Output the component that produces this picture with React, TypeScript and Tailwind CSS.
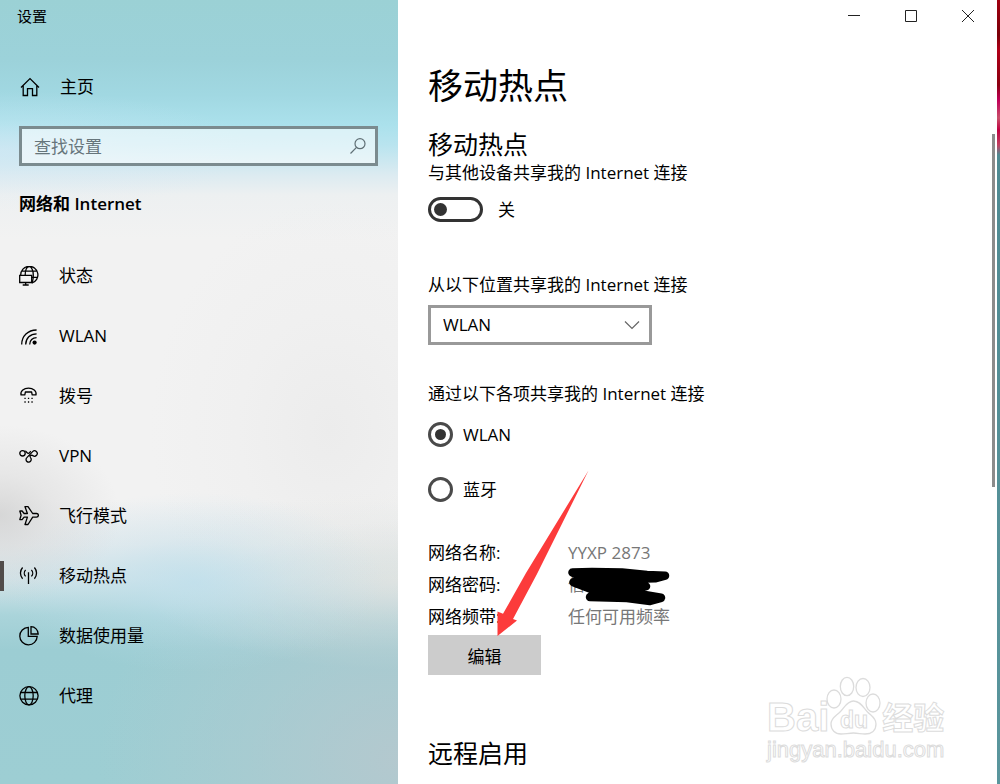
import { useState } from 'react'
import type { ReactNode } from 'react'

interface NavItem {
  id: string
  label: string
  icon: ReactNode
}

function Icon({ children }: { children: ReactNode }) {
  return (
    <svg viewBox="0 0 20 20" className="size-5 shrink-0" fill="none" stroke="currentColor" strokeWidth="1.3" aria-hidden="true">
      {children}
    </svg>
  )
}

const navItems: NavItem[] = [
  {
    id: 'status',
    label: '状态',
    icon: (
      <Icon>
        <path d="M1.700 9A8.600 8.600 0 1 1 12.700 17.200M3 5.200h14.600M12.700 11.300h6.100M6.200 9C6.300 4 8 .7 10.300.7s4 3.800 4 8.300-.8 6.800-1.700 8" />
        <path d="M.7 9.300h12v7.200H.7zM6.700 16.500v2.200M3.700 19h6" />
      </Icon>
    ),
  },
  {
    id: 'wlan',
    label: 'WLAN',
    icon: (
      <Icon>
        <path d="M2.700 18.500C2.700 10 9 4 17.600 4M6.700 18.500c0-6.200 4.500-10.700 10.900-10.700M10.700 18.500c0-4 2.800-6.900 6.900-6.900" />
        <circle cx="15.600" cy="16.600" r="2.100" fill="currentColor" stroke="none" />
      </Icon>
    ),
  },
  {
    id: 'dialup',
    label: '拨号',
    icon: (
      <Icon>
        <path d="M5.800 8.800H2C1.200 4.600 5 2.200 9.500 2.200s8.300 2.400 7.500 6.600h-3.800l-.6-2.800H6.400z" strokeLinejoin="round" />
        <path d="M5.400 12.300h1.300M8.900 12.300h1.300M12.400 12.300h1.300M5.400 16h1.300M8.900 16h1.300M12.400 16h1.300" />
      </Icon>
    ),
  },
  {
    id: 'vpn',
    label: 'VPN',
    icon: (
      <Icon>
        <circle cx="3.500" cy="7.300" r="2.700" />
        <path d="M6.200 5.200c1.200 0 1.800 2.200 3.200 2.200 1.200 0 1.400-1.600 2.400-2.200" />
        <path d="M7.600 11.900 13.600 5.600a2.700 2.700 0 1 1 .2 4c-1-.7-2.800-.2-2.900 1.400" />
        <path d="M11 11.300a2.600 2.600 0 1 1-3.400.6" />
      </Icon>
    ),
  },
  {
    id: 'airplane',
    label: '飞行模式',
    icon: (
      <Icon>
        <path d="M.8 5h2.300l2 2.500h3.300L6 .7h3l4.700 6.800h3.800c2.500 0 2.500 3.600 0 3.600h-3.800L9 18.500H6l2.400-7.400H5.100l-2 2.500H.8l1.300-4.300z" strokeLinejoin="round" />
      </Icon>
    ),
  },
  {
    id: 'hotspot',
    label: '移动热点',
    icon: (
      <Icon>
        <path d="M9.500 6.300V18M6.600 4a4.600 4.600 0 0 0 0 6.400M12.400 4a4.600 4.600 0 0 1 0 6.400M3.600 1.500a8.400 8.400 0 0 0 0 11.200M15.400 1.500a8.400 8.400 0 0 1 0 11.200" />
      </Icon>
    ),
  },
  {
    id: 'usage',
    label: '数据使用量',
    icon: (
      <Icon>
        <path d="M9.300 1.400a8.700 8.700 0 1 0 8.900 8.900H9.300z" />
        <path d="M12 .7v7.300h7.200A7.300 7.300 0 0 0 12 .7z" />
      </Icon>
    ),
  },
  {
    id: 'proxy',
    label: '代理',
    icon: (
      <Icon>
        <circle cx="10" cy="9.800" r="9.100" />
        <ellipse cx="10" cy="9.800" rx="4.200" ry="9.100" />
        <path d="M1.700 6.500h16.600M1.700 13.100h16.600" />
      </Icon>
    ),
  },
]

function Sidebar({ active, onSelect }: { active: string; onSelect: (id: string) => void }) {
  return (
    <aside className="w-[398px] shrink-0 bg-[radial-gradient(ellipse_120px_90px_at_0px_515px,rgba(204,204,204,0.7),rgba(204,204,204,0.3)_45%,rgba(204,204,204,0)),radial-gradient(ellipse_190px_90px_at_195px_582px,rgba(190,223,236,0.8),rgba(190,223,236,0.3)_50%,rgba(190,223,236,0)),radial-gradient(ellipse_300px_240px_at_398px_760px,rgba(182,200,206,0.9),rgba(182,200,206,0.4)_50%,rgba(182,200,206,0)),radial-gradient(ellipse_260px_90px_at_398px_580px,rgba(234,234,230,0.9),rgba(234,234,230,0.4)_50%,rgba(234,234,230,0)),radial-gradient(ellipse_180px_230px_at_330px_430px,rgba(225,225,225,0.35),rgba(225,225,225,0.12)_50%,rgba(225,225,225,0)),radial-gradient(ellipse_260px_60px_at_0px_150px,rgba(215,233,245,0.6),rgba(215,233,245,0.2)_50%,rgba(215,233,245,0)),linear-gradient(#9bd1d5_0px,#9cd2da_60px,#a1d8e2_95px,#abe1ec_125px,#b9e4ef_145px,#dcebf1_175px,#edf0f1_195px,#f2f2f2_240px,#f2f2f2_500px,#e8ecee_545px,#d2e4e9_580px,#aad4da_615px,#9ccdd3_650px,#9dced3_784px)]">
      <div className="flex h-8 items-center pl-[17px] text-[15px]">设置</div>
      <a href="#home" className="mt-[34px] flex h-[42px] items-center gap-5 pl-5">
        <Icon>
          <path d="M1 10.500 10 1.600l9 8.900M3.200 8.500v10h4.300v-6.800h5v6.800h4.300v-10" />
        </Icon>
        主页
      </a>
      <div className="mt-[18px] pr-5 pl-[19px]">
        <div className="flex h-10 items-center border-[3px] border-[#7b8b8f] bg-white/55 pr-2 pl-3 text-[#5f6f75]">
          <input type="text" aria-label="查找设置" placeholder="查找设置" className="h-8 min-w-0 flex-1 bg-transparent outline-none placeholder:text-[#66757b]" />
          <svg viewBox="0 0 18 18" className="size-[18px]" fill="none" stroke="currentColor" strokeWidth="1.200" aria-hidden="true">
            <circle cx="11" cy="6.700" r="5" />
            <path d="M7.500 10.300 1.500 16.500" />
          </svg>
        </div>
      </div>
      <h2 className="mt-[26px] pl-[19px] leading-6 font-bold">
        网络和 <span className="font-semibold">Internet</span>
      </h2>
      <nav className="mt-[30px]">
        {navItems.map((item) => (
          <a
            key={item.id}
            href={`#${item.id}`}
            onClick={() => onSelect(item.id)}
            aria-current={item.id === active ? 'page' : undefined}
            className="flex h-[60px] items-center"
          >
            <span className={item.id === active ? 'h-[30px] w-1 bg-[#514c4a]' : 'w-1'} />
            <span className="flex items-center gap-5 pl-[15px]">
              {item.icon}
              {item.label}
            </span>
          </a>
        ))}
      </nav>
    </aside>
  )
}

function WindowButtons() {
  const button = 'flex h-8 w-[57px] items-center justify-center'
  return (
    <div className="flex justify-end">
      <button type="button" aria-label="最小化" className={button}>
        <svg viewBox="0 0 13 13" className="size-[13px]" stroke="#222">
          <path d="M0 5.500h12" />
        </svg>
      </button>
      <button type="button" aria-label="最大化" className={button}>
        <svg viewBox="0 0 13 13" className="size-[13px]" stroke="#222" fill="none">
          <path d="M.5.5h11v11H.5z" />
        </svg>
      </button>
      <button type="button" aria-label="关闭" className={button}>
        <svg viewBox="0 0 13 13" className="size-[13px]" stroke="#222">
          <path d="m0 0 12 12M12 0 0 12" />
        </svg>
      </button>
    </div>
  )
}

function ShareOption({ label, checked, onChange }: { label: string; checked: boolean; onChange: () => void }) {
  return (
    <label className="flex h-[25px] items-center gap-[10px]">
      <input
        type="radio"
        name="share-over"
        checked={checked}
        onChange={onChange}
        className="flex size-[25px] appearance-none items-center justify-center rounded-full border-[3px] border-[#4a4a4a] before:size-[11px] before:rounded-full checked:before:bg-[#333]"
      />
      {label}
    </label>
  )
}

function Watermark() {
  const outline = 'text-white [-webkit-text-stroke:1px_#dcdcdc]'
  return (
    <div className="pointer-events-none absolute right-[51px] bottom-[20px] w-[179px] font-['Liberation_Sans','Noto_Sans_CJK_SC',sans-serif]">
      <div className="flex h-[60px] items-end">
        <span className={`${outline} text-[40px] leading-[38px] font-bold`}>Bai</span>
        <svg viewBox="0 0 56 60" className="-ml-[3px] h-[60px] w-14 shrink-0" fill="#fff" stroke="#dcdcdc" strokeWidth="1.300" aria-hidden="true">
          <ellipse cx="8" cy="23" rx="7" ry="9" />
          <ellipse cx="21" cy="10.500" rx="6.700" ry="9.200" />
          <ellipse cx="37" cy="11.500" rx="7" ry="9" />
          <ellipse cx="47" cy="27" rx="7" ry="9" />
          <path d="M27.500 25c7 0 10 7 14 11s8.500 6 8.500 12c0 7-5 10-11 10-4 0-7-1-11.500-1S19 58 15 58C9 58 5 54 5 48c0-6 5-8 9-12s7-11 13.500-11z" />
          <text x="14" y="52" fontSize="23" fontWeight="bold" strokeWidth="1">du</text>
        </svg>
        <span className={`${outline} text-[31px] leading-[34px] font-bold`}>经验</span>
      </div>
      <div className={`${outline} text-[22px] leading-7`}>jingyan.baidu.com</div>
    </div>
  )
}

function HotspotDetails() {
  return (
    <section className="relative mt-[35px]">
      <dl className="grid grid-cols-[140px_1fr] leading-8">
        <dt>网络名称:</dt>
        <dd className="text-[#777]">YYXP 2873</dd>
        <dt>网络密码:</dt>
        <dd className="relative text-[#777]">
          信
          {/* password scribbled out */}
          <svg viewBox="0 0 105 40" className="absolute -top-[2px] -left-px h-10 w-[105px]" stroke="#000" strokeWidth="8.500" strokeLinecap="round" strokeLinejoin="round" aria-hidden="true">
            <path d="M5.500 5.500 25 5l30 .5L80 8l18 .7-10 2.600L62 12l17 7.300L60 25l34 5.800L83 34 60 31l-37-1 9-5L6.500 15.300 20 13z" />
          </svg>
        </dd>
        <dt>网络频带:</dt>
        <dd className="text-[#777]">任何可用频率</dd>
      </dl>
      <button type="button" className="mt-[2px] h-10 w-[113px] bg-[#ccc] pt-1">编辑</button>
      <svg viewBox="0 0 92 167" className="pointer-events-none absolute -top-[67px] left-[69px] h-[167px] w-[92px]" fill="#fc3b3b" aria-hidden="true">
        <path d="M91.500.5 40 104 16 149l4 1.500L.5 166V141.500l5.500 2.300L29 103z" />
      </svg>
    </section>
  )
}

export default function App() {
  const [active, setActive] = useState('hotspot')
  const [enabled, setEnabled] = useState(false)
  const [shareOver, setShareOver] = useState('wlan')

  return (
    <div className="flex min-h-screen bg-white font-['Open_Sans','Noto_Sans_CJK_SC',sans-serif] text-[17px] text-black">
      <Sidebar active={active} onSelect={setActive} />
      <main className="relative min-w-0 flex-1">
        <WindowButtons />
        <div className="pt-8 pl-[30px]">
          <h1 className="text-[35px] leading-[44px]">移动热点</h1>
          <h2 className="mt-5 text-[25px] leading-8">移动热点</h2>
          <p className="mt-px leading-6">与其他设备共享我的 Internet 连接</p>
          <label className="mt-3 flex h-[25px] w-fit items-center gap-[15px]">
            <input
              type="checkbox"
              role="switch"
              checked={enabled}
              onChange={() => setEnabled(!enabled)}
              className="flex h-[25px] w-[55px] appearance-none items-center rounded-full border-[3px] border-[#333] px-[3px] before:size-[13px] before:rounded-full before:bg-[#333] checked:justify-end"
            />
            {enabled ? '开' : '关'}
          </label>

          <label htmlFor="share-from" className="mt-[51px] block w-fit leading-6">从以下位置共享我的 Internet 连接</label>
          <div className="mt-2 grid w-56 items-center">
            <select id="share-from" className="col-start-1 row-start-1 h-10 appearance-none border-[3px] border-[#999] bg-white pl-3">
              <option>WLAN</option>
            </select>
            <svg viewBox="0 0 16 10" className="pointer-events-none col-start-1 row-start-1 mr-3 h-[10px] w-4 justify-self-end" fill="none" stroke="#666" strokeWidth="1.200" aria-hidden="true">
              <path d="m1 1.500 7 7 7-7" />
            </svg>
          </div>

          <fieldset className="mt-[37px]">
            <legend className="leading-6">通过以下各项共享我的 Internet 连接</legend>
            <div className="mt-4 flex flex-col gap-[30px]">
              <ShareOption label="WLAN" checked={shareOver === 'wlan'} onChange={() => setShareOver('wlan')} />
              <ShareOption label="蓝牙" checked={shareOver === 'bluetooth'} onChange={() => setShareOver('bluetooth')} />
            </div>
          </fieldset>

          <HotspotDetails />
          <h2 className="mt-[62px] text-[25px] leading-8">远程启用</h2>
        </div>
        <Watermark />
      </main>
      {/* scrollbar thumb, then the sliver of desktop behind the window */}
      <div className="-ml-[5px] w-[5px] pt-[134px]">
        <div className="h-[353px] w-[3px] bg-[#8c8c8c]" />
      </div>
      <div className="w-[3px] bg-[linear-gradient(#a00010_0px,#7a0008_35px,#b00018_50px,#8a0010_85px,#c00058_100px,#c8506a_118px,#c00040_130px,#c04060_145px,#4f8a92_155px,#5a969d_784px)]" />
    </div>
  )
}
